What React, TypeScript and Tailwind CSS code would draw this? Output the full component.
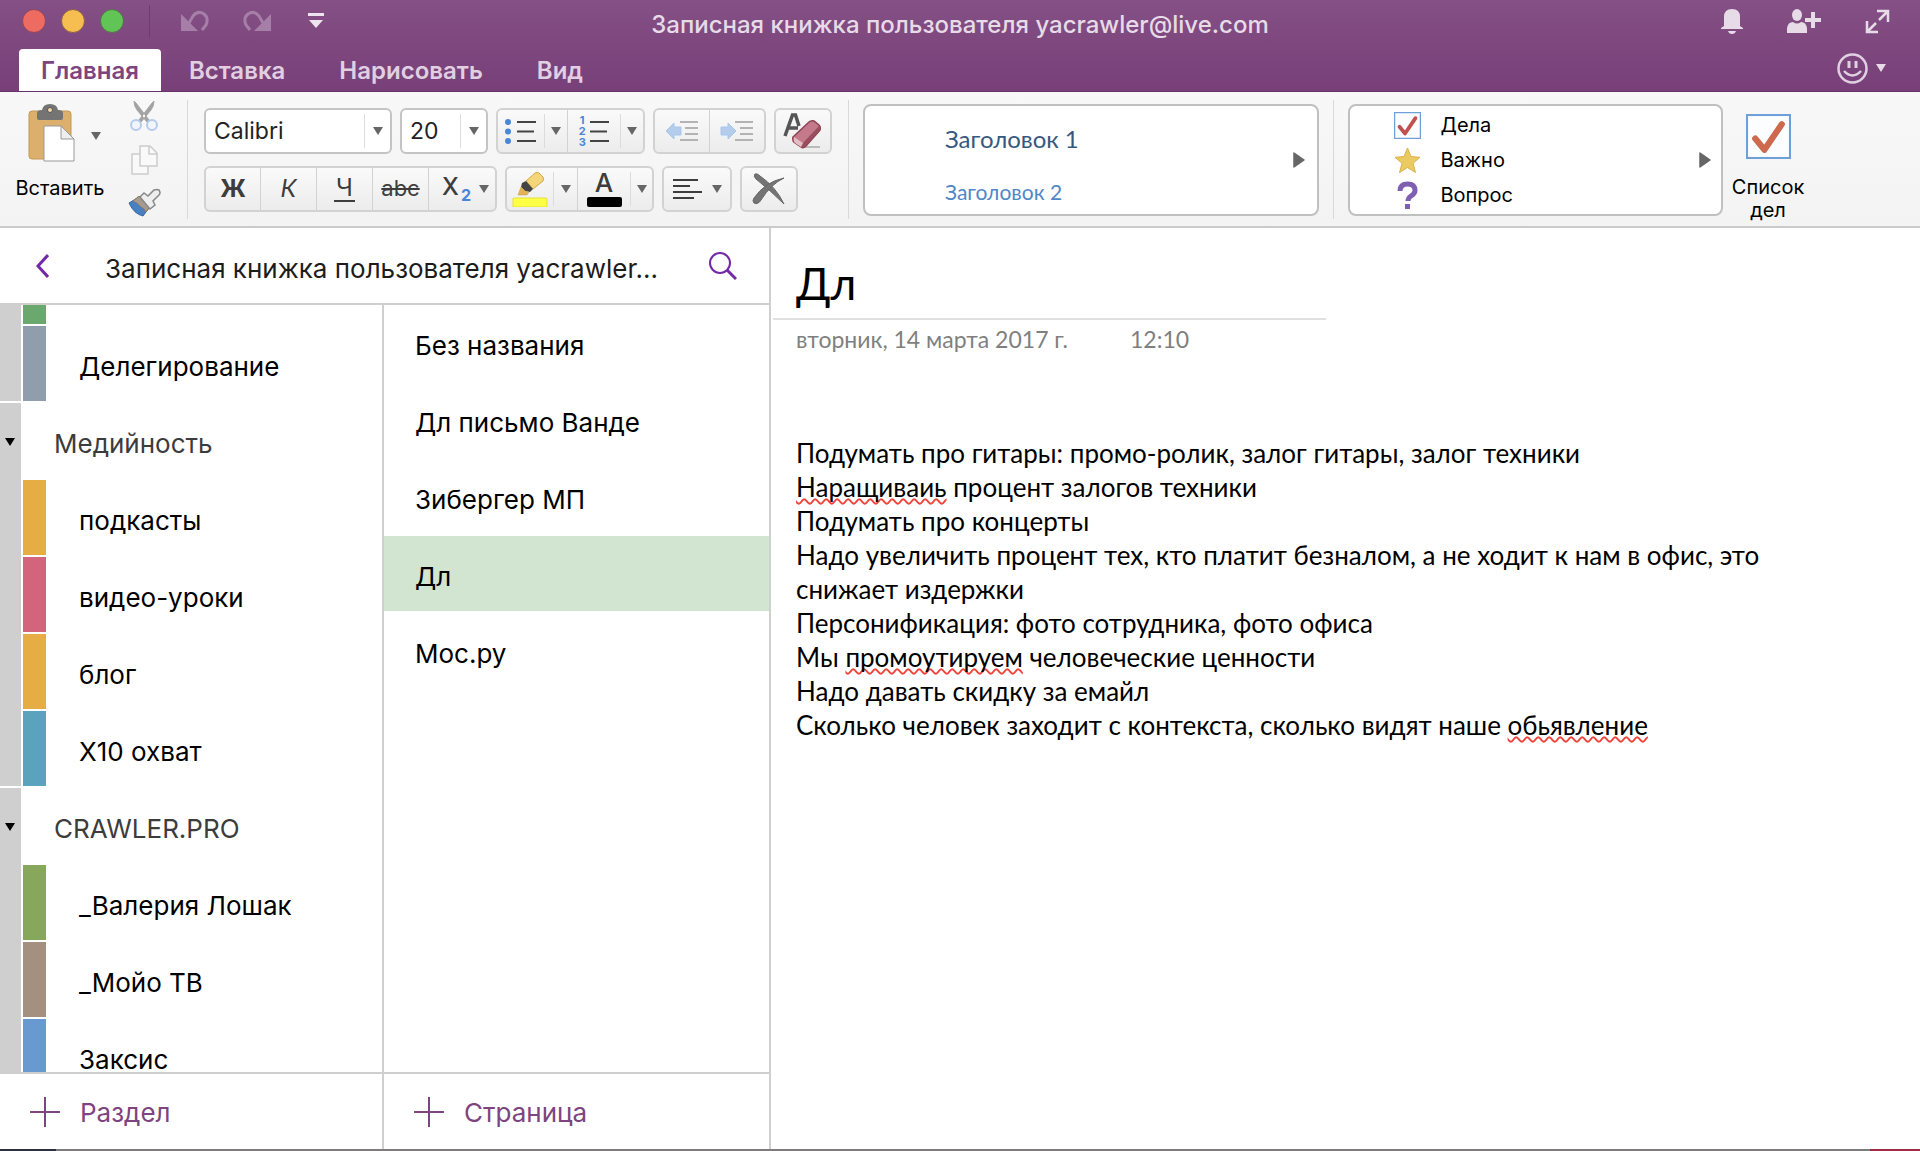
import type { ReactNode } from "react";

const groups = [
	{
		title: "",
		sections: [
			{ name: "", color: "bg-[#6aa86d]", height: "h-[21px]" },
			{ name: "Делегирование", color: "bg-[#909dad]", height: "h-[77px]" },
		],
	},
	{
		title: "Медийность",
		sections: [
			{ name: "подкасты", color: "bg-[#e5ad43]", height: "h-[77px]" },
			{ name: "видео-уроки", color: "bg-[#d4647b]", height: "h-[77px]" },
			{ name: "блог", color: "bg-[#e5ad43]", height: "h-[77px]" },
			{ name: "Х10 охват", color: "bg-[#5ba3bd]", height: "h-[77px]" },
		],
	},
	{
		title: "CRAWLER.PRO",
		sections: [
			{ name: "_Валерия Лошак", color: "bg-[#87a85b]", height: "h-[77px]" },
			{ name: "_Мойо ТВ", color: "bg-[#a4907f]", height: "h-[77px]" },
			{ name: "Заксис", color: "bg-[#6899d0]", height: "h-[77px]" },
		],
	},
];

const pages = ["Без названия", "Дл письмо Ванде", "Зибергер МП", "Дл", "Мос.ру"];

function Caret({ className = "text-[#666]" }: { className?: string }) {
	return (
		<svg width="10" height="8" viewBox="0 0 10 8" className={`shrink-0 ${className}`} aria-hidden="true">
			<path d="M0 0h10L5 8z" fill="currentColor" />
		</svg>
	);
}

function RightArrow() {
	return (
		<svg width="12" height="16" viewBox="0 0 12 16" aria-hidden="true">
			<path d="M1 1v14L11 8z" fill="#666" stroke="#666" strokeWidth="1.5" strokeLinejoin="round" />
		</svg>
	);
}

function ToolGroup({ children, className = "" }: { children: ReactNode; className?: string }) {
	return (
		<div
			className={`flex h-[46px] items-stretch rounded-md border-2 border-[#d2d2d2] bg-linear-to-b from-[#fafafa] to-[#ececec] ${className}`}
		>
			{children}
		</div>
	);
}

function Tool({
	label,
	children,
	className = "w-14 justify-center",
}: {
	label: string;
	children: ReactNode;
	className?: string;
}) {
	return (
		<button type="button" aria-label={label} className={`flex items-center ${className}`}>
			{children}
		</button>
	);
}

function Split() {
	return <div className="w-px bg-[#d2d2d2]" />;
}

function InnerSplit() {
	return <div className="my-1 w-px bg-[#dcdcdc]" />;
}

function Divider() {
	return <div className="mt-2 h-[119px] w-px shrink-0 bg-[#d9d9d9]" />;
}

function Picker({ label, value, className }: { label: string; value: string; className: string }) {
	return (
		<div className={`relative h-[46px] rounded-md border-2 border-[#c4c4c4] bg-white ${className}`}>
			<select aria-label={label} className="h-full w-full appearance-none px-2 text-[23px] text-[#222] outline-none">
				<option>{value}</option>
			</select>
			<div className="pointer-events-none absolute inset-y-1 right-0 flex w-[26px] items-center justify-center border-l border-[#dcdcdc]">
				<Caret />
			</div>
		</div>
	);
}

function Lines({ x = 0 }: { x?: number }) {
	return (
		<g stroke="#444" strokeWidth="2">
			<path d={`M${x} 5h19M${x} 14.500h17M${x} 24h19`} />
		</g>
	);
}

function BulletIcon() {
	return (
		<svg width="32" height="29" viewBox="0 0 32 29">
			<circle cx="3" cy="5" r="3" fill="#4a86d8" />
			<circle cx="3" cy="14.500" r="3" fill="#4a86d8" />
			<circle cx="3" cy="24" r="3" fill="#4a86d8" />
			<Lines x={12} />
		</svg>
	);
}

function NumberIcon() {
	return (
		<span className="flex items-center gap-1">
			<span className="flex w-[7px] flex-col text-[11px] leading-[11px] font-bold text-[#4a86d8]">
				<span>1</span>
				<span>2</span>
				<span>3</span>
			</span>
			<svg width="20" height="29" viewBox="0 0 20 29">
				<Lines />
			</svg>
		</span>
	);
}

function IndentIcon({ right = false }: { right?: boolean }) {
	return (
		<svg width="34" height="24" viewBox="0 0 34 24">
			<path
				d={right ? "M1 8h7V4l8 8-8 8v-4H1z" : "M16 8H9V4l-8 8 8 8v-4h7z"}
				fill="#b4cdec"
				stroke="#a9c6ea"
				strokeLinejoin="round"
			/>
			<path d="M15 3h18M20 9h13M20 15h13M15 21h18" stroke="#b3b3b3" strokeWidth="2" />
		</svg>
	);
}

function EraserIcon() {
	return (
		<svg width="42" height="38" viewBox="0 0 42 38">
			<path d="M20 35h18" stroke="#bbb" strokeWidth="2" />
			<path d="M3 24L10.500 3h3L17 14M6 16h10" fill="none" stroke="#555" strokeWidth="3.500" />
			<path d="M11 25L27 10q2-2 5-1l5 4q2 2 1 5L24 34q-3 3-5 1l-6-4q-3-2-2-6z" fill="#c47a8b" stroke="#8c4252" strokeWidth="1.500" />
			<path d="M21 31l16-17 1 4-14 16q-3 3-5 1z" fill="#9b4d60" />
			<path d="M12 25l9 6-2 4-6-4q-2-2-1-6z" fill="#e3bcc4" />
		</svg>
	);
}

function HighlighterIcon() {
	return (
		<svg width="36" height="36" viewBox="0 0 36 36">
			<path d="M14 10L23 2q2-1 4 0l4 4q1 2 0 4l-10 8z" fill="#f5d57a" stroke="#d3a840" />
			<path d="M14 10l7 8-3 3-5-1-4-4 1-4z" fill="#444" />
			<path d="M9 16l4 4 4 1-2 3H6z" fill="#e3b455" stroke="#c79a42" strokeWidth=".5" />
			<rect x="1" y="27" width="34" height="9" rx="1" fill="#ffff45" stroke="#e6e135" />
		</svg>
	);
}

function PasteIcon() {
	return (
		<svg width="47" height="58" viewBox="0 0 47 58">
			<rect x="1" y="7" width="42" height="48" rx="3" fill="#dcb06c" stroke="#c39855" />
			<path d="M9 14V9q0-3 5-3 1-6 8-6t8 6q5 0 5 3v5q0 2-2 2H11q-2 0-2-2z" fill="#747474" />
			<circle cx="22" cy="6" r="2.500" fill="#f2d9ae" stroke="#555" />
			<path d="M16 22h17l13 13v22H16z" fill="#fff" stroke="#999" />
			<path d="M33 22v13h13z" fill="#eee" stroke="#999" strokeLinejoin="round" />
		</svg>
	);
}

function ScissorsIcon() {
	return (
		<svg width="28" height="32" viewBox="0 0 28 32">
			<path d="M4 1q0 5 3 9l10 12 2-2L6 3zM24 1q0 5-3 9L11 22l-2-2L22 3z" fill="#a3a3a3" stroke="#a3a3a3" />
			<circle cx="6" cy="25" r="5" fill="#f2f5fa" stroke="#b4cbee" strokeWidth="2" />
			<circle cx="22" cy="25" r="5" fill="#f2f5fa" stroke="#b4cbee" strokeWidth="2" />
		</svg>
	);
}

function CopyIcon() {
	return (
		<svg width="27" height="30" viewBox="0 0 27 30" fill="#f9f9f9" stroke="#ccc" strokeWidth="1.500">
			<path d="M1 9h16v20H1z" />
			<path d="M9 1h10l7 7v13H9z" />
			<path d="M18 1v8h8" fill="none" />
		</svg>
	);
}

function BrushIcon() {
	return (
		<svg width="33" height="29" viewBox="0 0 33 29">
			<path d="M1 15l10-6 10 11-6 8Q6 26 1 15z" fill="#4781c4" stroke="#35679f" />
			<path d="M5 13l6-5 9 9 1 3-3 4q-2-4-5-5-3-4-8-6z" fill="#a89a8c" stroke="#887a6c" />
			<path d="M12 9l4-4 4 3 6-6q3-1 5 0 2 3 0 5l-6 6 2 4-5 4z" fill="#eee" stroke="#888" strokeWidth="1.500" />
		</svg>
	);
}

function CheckIcon({ size, color }: { size: number; color: string }) {
	return (
		<svg width={size} height={size} viewBox="0 0 44 44">
			<rect x="1" y="1" width="42" height="42" fill="#fbfdff" stroke="#6f9fd8" strokeWidth="2" />
			<path d="M9 24l9 11L35 10" fill="none" stroke={color} strokeWidth="6" strokeLinecap="round" strokeLinejoin="round" />
		</svg>
	);
}

function TitleBar() {
	return (
		<div className="grid h-[49px] grid-cols-[1fr_auto_1fr] items-start">
			<div className="flex h-[42px] items-center pl-[22px]">
				<div className="flex gap-[15px]">
					<button type="button" aria-label="Закрыть" className="size-6 rounded-full border border-[#8a4560] bg-[#ed6b60]" />
					<button type="button" aria-label="Свернуть" className="size-6 rounded-full border border-[#8a5a50] bg-[#f6be50]" />
					<button type="button" aria-label="Развернуть" className="size-6 rounded-full border border-[#5a6a50] bg-[#61c555]" />
				</div>
				<div className="ml-[25px] h-8 w-px bg-[#6d3d6f]" />
				<button type="button" aria-label="Отменить" className="ml-[30px]">
					<svg width="30" height="24" viewBox="0 0 30 24">
						<path d="M1 5v17h17z" fill="#a57fa7" />
						<path d="M9 14L13 7q5-6 11-2 5 4 2 11l-4 5" fill="none" stroke="#a57fa7" strokeWidth="3" />
					</svg>
				</button>
				<button type="button" aria-label="Повторить" className="ml-8">
					<svg width="30" height="24" viewBox="0 0 30 24">
						<path d="M29 5v17H12z" fill="#a57fa7" />
						<path d="M21 14L17 7Q12 1 6 5q-5 4-2 11l4 5" fill="none" stroke="#a57fa7" strokeWidth="3" />
					</svg>
				</button>
				<button type="button" aria-label="Настроить панель" className="ml-9">
					<svg width="16" height="16" viewBox="0 0 16 16" fill="#eee4ee">
						<path d="M0 0h16v3H0zM1 7h14l-7 8z" />
					</svg>
				</button>
			</div>
			<div className="flex h-[49px] items-center text-2xl font-medium text-[#e7dbe7]">
				Записная книжка пользователя yacrawler@live.com
			</div>
			<div className="flex h-[42px] items-center justify-end gap-11 pr-[30px] text-[#e7dbe7]">
				<button type="button" aria-label="Уведомления">
					<svg width="22" height="25" viewBox="0 0 22 25" fill="currentColor">
						<path d="M3 17V8q0-8 8-8t8 8v9l3 2v1H0v-1zM7 22h8q-1 3-4 3t-4-3z" />
					</svg>
				</button>
				<button type="button" aria-label="Общий доступ">
					<svg width="34" height="25" viewBox="0 0 34 25" fill="currentColor">
						<ellipse cx="10" cy="6" rx="5" ry="6" />
						<path d="M0 24v-5q1-6 6-6 4 3 8 0 5 0 6 6v5zM24 3h4v6h6v4h-6v6h-4v-6h-6V9h6z" />
					</svg>
				</button>
				<button type="button" aria-label="Во весь экран">
					<svg width="25" height="25" viewBox="0 0 25 25" fill="none" stroke="currentColor" strokeWidth="2.500">
						<path d="M12 2h11v11M23 2l-9 9M2 12v11h11M2 23l9-9" />
					</svg>
				</button>
			</div>
		</div>
	);
}

function Tabs() {
	return (
		<nav className="flex h-[42px] items-center pl-[19px] text-2xl font-semibold text-[#e0d0e1]">
			<button type="button" className="h-full rounded-t bg-white px-[22px] pt-0.5 text-[#7d4480]">
				Главная
			</button>
			<button type="button" className="ml-7 pt-0.5">
				Вставка
			</button>
			<button type="button" className="ml-[54px] pt-0.5">
				Нарисовать
			</button>
			<button type="button" className="ml-[54px] pt-0.5">
				Вид
			</button>
			<button type="button" aria-label="Отзыв" className="mr-[34px] mb-1 ml-auto flex items-center gap-2">
				<svg width="31" height="31" viewBox="0 0 31 31" fill="none" stroke="currentColor">
					<circle cx="15.500" cy="15.500" r="14" strokeWidth="2.500" />
					<path d="M12 8v7M19 8v7" strokeWidth="3" />
					<path d="M7 18q8.500 9 17 0" strokeWidth="2.500" />
				</svg>
				<Caret className="text-[#e7dbe7]" />
			</button>
		</nav>
	);
}

function Ribbon() {
	return (
		<div className="flex h-[136px] items-start border-b-2 border-[#cbcbcb] bg-linear-to-b from-[#f8f8f8] to-[#f3f3f3] text-xl text-black">
			<button type="button" className="mt-3 ml-[14px] flex w-[92px] flex-col items-center gap-3">
				<span className="flex items-center gap-4 pl-2">
					<PasteIcon />
					<Caret className="mt-1.5 text-[#666]" />
				</span>
				<span>Вставить</span>
			</button>
			<div className="mt-2 ml-[22px] flex w-8 flex-col items-center gap-[13px]">
				<button type="button" aria-label="Вырезать">
					<ScissorsIcon />
				</button>
				<button type="button" aria-label="Копировать">
					<CopyIcon />
				</button>
				<button type="button" aria-label="Формат по образцу">
					<BrushIcon />
				</button>
			</div>
			<div className="ml-[27px]">
				<Divider />
			</div>

			<div className="mt-4 ml-4 flex shrink-0 flex-col gap-3">
				<div className="flex">
					<Picker label="Шрифт" value="Calibri" className="w-[188px]" />
					<Picker label="Размер" value="20" className="ml-2 w-[88px]" />
					<ToolGroup className="ml-2 w-[149px]">
						<Tool label="Маркеры" className="w-[47px] justify-center">
							<BulletIcon />
						</Tool>
						<InnerSplit />
						<Tool label="Виды маркеров" className="w-[22px] justify-center">
							<Caret />
						</Tool>
						<Split />
						<Tool label="Нумерация" className="w-[53px] justify-center">
							<NumberIcon />
						</Tool>
						<InnerSplit />
						<Tool label="Виды нумерации" className="w-[22px] justify-center">
							<Caret />
						</Tool>
					</ToolGroup>
					<ToolGroup className="ml-2">
						<Tool label="Уменьшить отступ" className="w-[54px] justify-center">
							<IndentIcon />
						</Tool>
						<Split />
						<Tool label="Увеличить отступ" className="w-[54px] justify-center">
							<IndentIcon right />
						</Tool>
					</ToolGroup>
					<ToolGroup className="ml-2">
						<Tool label="Очистить формат" className="w-[54px] justify-center">
							<EraserIcon />
						</Tool>
					</ToolGroup>
				</div>
				<div className="flex text-2xl text-[#3d3d3d]">
					<ToolGroup>
						<Tool label="Полужирный" className="w-[54px] justify-center font-bold">
							Ж
						</Tool>
						<Split />
						<Tool label="Курсив" className="w-[55px] justify-center italic">
							К
						</Tool>
						<Split />
						<Tool label="Подчеркнутый" className="w-[55px] justify-center">
							<span className="border-b-2 border-[#3d3d3d] px-0.5 leading-6">Ч</span>
						</Tool>
						<Split />
						<Tool label="Зачеркнутый" className="w-[55px] justify-center text-[22px] line-through">
							abc
						</Tool>
						<Split />
						<Tool label="Подстрочный" className="w-[66px] justify-end pr-1.5">
							<span className="pb-1 font-medium">X</span>
							<span className="mt-3 ml-0.5 text-base font-bold text-[#4a86d8]">2</span>
							<span className="pl-2">
								<Caret />
							</span>
						</Tool>
					</ToolGroup>
					<ToolGroup className="ml-2">
						<Tool label="Цвет выделения" className="w-[46px] justify-center">
							<HighlighterIcon />
						</Tool>
						<InnerSplit />
						<Tool label="Цвета выделения" className="w-[23px] justify-center">
							<Caret />
						</Tool>
						<Split />
						<Tool label="Цвет шрифта" className="w-[52px] flex-col justify-center">
							<span className="text-[26px] leading-6 font-medium">A</span>
							<span className="mt-0.5 h-[10px] w-[35px] rounded-xs bg-black" />
						</Tool>
						<InnerSplit />
						<Tool label="Цвета шрифта" className="w-[21px] justify-center">
							<Caret />
						</Tool>
					</ToolGroup>
					<ToolGroup className="ml-2">
						<Tool label="Выравнивание" className="w-[66px] justify-center gap-2.5">
							<svg width="29" height="22" viewBox="0 0 29 22">
								<path d="M0 2h25M0 8h17M0 14h29M0 20h21" stroke="#3d3d3d" strokeWidth="2" />
							</svg>
							<Caret />
						</Tool>
					</ToolGroup>
					<ToolGroup className="ml-2">
						<Tool label="Удалить" className="w-[54px] justify-center">
							<svg width="34" height="32" viewBox="0 0 34 32" fill="#747474" stroke="#666">
								<path d="M3 1q2-1 5 2 16 11 24 28Q19 18 4 6 1 3 3 1z" />
								<path d="M32 5Q19 11 9 27q-3 5-7 3-2-2 0-5Q13 9 32 5z" />
							</svg>
						</Tool>
					</ToolGroup>
				</div>
			</div>

			<div className="ml-4">
				<Divider />
			</div>

			<div className="mt-3 ml-[14px] flex h-[112px] min-w-0 grow-[359] basis-0 items-center justify-between rounded-lg border-2 border-[#c0c0c0] bg-white pr-3 pl-20 font-[Lato,sans-serif]">
				<div className="flex flex-col">
					<button type="button" className="pt-2.5 text-left text-2xl text-[#35587f]">
						Заголовок 1
					</button>
					<button type="button" className="mt-[22px] text-left text-[21px] text-[#4f87c7]">
						Заголовок 2
					</button>
				</div>
				<button type="button" aria-label="Другие стили">
					<RightArrow />
				</button>
			</div>

			<div className="ml-[14px]">
				<Divider />
			</div>

			<div className="mt-3 ml-[14px] flex h-[112px] min-w-0 grow-[317] basis-0 items-center justify-between rounded-lg border-2 border-[#c0c0c0] bg-white pr-2.5 pl-11">
				<div className="flex flex-col gap-[7px] leading-7">
					<button type="button" className="flex items-center gap-5">
						<CheckIcon size={27} color="#c0504d" />
						Дела
					</button>
					<button type="button" className="flex items-center gap-5">
						<svg width="27" height="27" viewBox="0 0 27 27">
							<path
								d="M13.500 1l3.500 8.500 9 .8-7 6 2.500 9.200-8-5-8 5L8 16.300l-7-6 9-.8z"
								fill="#ecca62"
								stroke="#d9b24a"
								strokeLinejoin="round"
							/>
						</svg>
						Важно
					</button>
					<button type="button" className="flex items-center gap-5">
						<svg width="27" height="28" viewBox="0 0 27 28">
							<path d="M6 10q0-7 7.500-7T21 9.500q0 3-4 5.500-3 2-3 5" fill="none" stroke="#7f5fb0" strokeWidth="5" />
							<rect x="11" y="23" width="5" height="5" fill="#7f5fb0" />
						</svg>
						Вопрос
					</button>
				</div>
				<button type="button" aria-label="Другие теги">
					<RightArrow />
				</button>
			</div>

			<button type="button" className="mt-[22px] mr-[109px] ml-0.5 flex w-[86px] shrink-0 flex-col items-center gap-[17px] leading-[23px]">
				<CheckIcon size={45} color="#cd694c" />
				<span>Список дел</span>
			</button>
		</div>
	);
}

function AddButton({ label }: { label: string }) {
	return (
		<button type="button" className="flex h-full items-center gap-5 pl-[30px] text-[26px] text-[#7d4480]">
			<svg width="30" height="30" viewBox="0 0 30 30" stroke="currentColor" strokeWidth="2">
				<path d="M15 0v30M0 15h30" />
			</svg>
			<span className="pt-0.5">{label}</span>
		</button>
	);
}

function Sidebar() {
	return (
		<aside className="flex w-[771px] shrink-0 flex-col border-r-2 border-[#cfcfcf]">
			<header className="flex h-[77px] shrink-0 items-center border-b-2 border-[#cfcfcf] pr-8 pl-9">
				<button type="button" aria-label="Назад">
					<svg width="13" height="24" viewBox="0 0 13 24" fill="none" stroke="#7229a8" strokeWidth="3">
						<path d="M12 1L2 12l10 11" />
					</svg>
				</button>
				<h2 className="ml-14 pt-1.5 text-[26px] whitespace-nowrap text-[#1c1c1c]">Записная книжка пользователя yacrawler...</h2>
				<button type="button" aria-label="Поиск" className="ml-auto">
					<svg width="28" height="28" viewBox="0 0 28 28" fill="none" stroke="#7229a8">
						<circle cx="11" cy="11" r="10" strokeWidth="2" />
						<path d="M18 18l9 9" strokeWidth="3" />
					</svg>
				</button>
			</header>
			<div className="flex min-h-0 flex-1 text-[26px]">
				<div className="flex w-[384px] flex-col border-r-2 border-[#cfcfcf]">
					<div className="min-h-0 flex-1 overflow-hidden">
						{groups.map((group) => (
							<section key={group.title} className="flex">
								<div className="w-[21px] shrink-0 border-b-2 border-white bg-[#cfcfcf] pt-[35px] pl-[5px]">
									{group.title && <Caret className="text-black" />}
								</div>
								<div className="flex flex-1 flex-col">
									{group.title && <h3 className="flex h-[77px] items-center pt-1 pl-[33px] text-[#3c3c3c]">{group.title}</h3>}
									{group.sections.map((section) => (
										<button key={section.name} type="button" className={`flex items-stretch pl-0.5 ${section.height}`}>
											<span className={`w-[23px] border-b-2 border-white ${section.color}`} />
											<span className="flex items-center pt-1 pl-[33px] leading-8">{section.name}</span>
										</button>
									))}
								</div>
							</section>
						))}
					</div>
					<footer className="h-[77px] shrink-0 border-t-2 border-[#cfcfcf]">
						<AddButton label="Раздел" />
					</footer>
				</div>
				<div className="flex flex-1 flex-col">
					<div className="flex min-h-0 flex-1 flex-col">
						{pages.map((page) => (
							<button
								key={page}
								type="button"
								className={`flex h-[77px] items-center border-b-2 border-white pt-1.5 pl-[31px] ${page === "Дл" ? "bg-[#d1e5d1]" : ""}`}
							>
								{page}
							</button>
						))}
					</div>
					<footer className="h-[77px] shrink-0 border-t-2 border-[#cfcfcf]">
						<AddButton label="Страница" />
					</footer>
				</div>
			</div>
		</aside>
	);
}

function Misspelled({ children }: { children: ReactNode }) {
	return (
		<span className="underline decoration-[#f0433a] decoration-wavy decoration-2 underline-offset-1 [text-decoration-skip-ink:none]">
			{children}
		</span>
	);
}

function Note() {
	return (
		<main className="flex-1 pt-6 pl-0.5 font-[Lato,sans-serif]">
			<div className="w-[553px] border-b-2 border-[#e0e0e0] pb-1 pl-[23px]">
				<h1 className="text-[44px] leading-[62px]">Дл</h1>
			</div>
			<div className="pr-[150px] pl-[23px]">
				<p className="flex gap-[62px] text-[23px] leading-[38px] text-[#7f7f7f]">
					<span>вторник, 14 марта 2017 г.</span>
					<span>12:10</span>
				</p>
				<div className="mt-[78px] text-[26px] leading-[34px]">
					<p>Подумать про гитары: промо-ролик, залог гитары, залог техники</p>
					<p>
						<Misspelled>Наращиваиь</Misspelled> процент залогов техники
					</p>
					<p>Подумать про концерты</p>
					<p>Надо увеличить процент тех, кто платит безналом, а не ходит к нам в офис, это снижает издержки</p>
					<p>Персонификация: фото сотрудника, фото офиса</p>
					<p>
						Мы <Misspelled>промоутируем</Misspelled> человеческие ценности
					</p>
					<p>Надо давать скидку за емайл</p>
					<p>
						Сколько человек заходит с контекста, сколько видят наше <Misspelled>обьявление</Misspelled>
					</p>
				</div>
			</div>
		</main>
	);
}

export default function App() {
	return (
		<div className="flex h-screen flex-col overflow-hidden bg-white font-[Inter,sans-serif] text-black">
			<header className="border-b border-[#66336a] bg-linear-to-b from-[#845085] to-[#783f78]">
				<TitleBar />
				<Tabs />
			</header>
			<Ribbon />
			<div className="flex min-h-0 flex-1">
				<Sidebar />
				<Note />
			</div>
			<div className="flex h-0.5 shrink-0 justify-between bg-[#7f7b7c]">
				<div className="w-14 bg-[#2b2f42]" />
				<div className="w-[50px] bg-[#9c2f45]" />
			</div>
		</div>
	);
}
